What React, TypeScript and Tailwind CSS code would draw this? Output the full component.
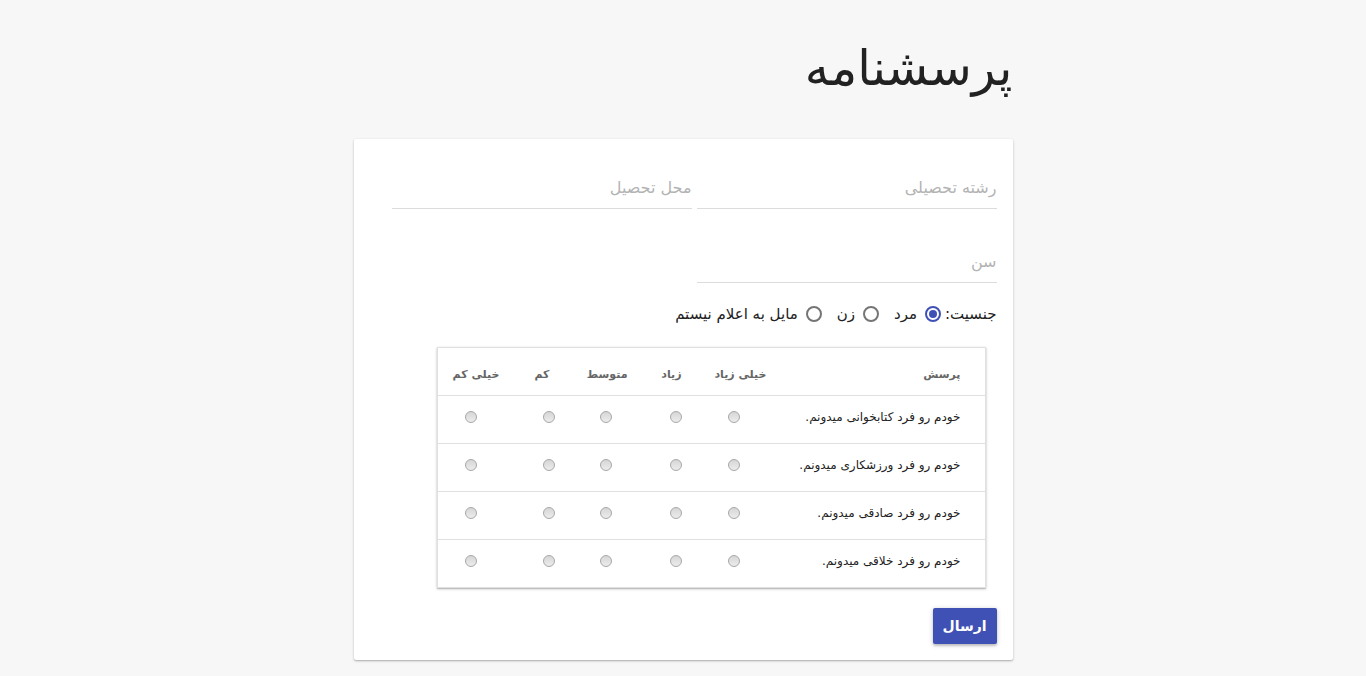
// Questionnaire page — RTL card with inputs, gender radios and a Likert table

const columns = [
  { label: 'خیلی زیاد', head: 'pr-[22px]', dot: 'pr-[49px]' },
  { label: 'زیاد', head: 'pr-[17px]', dot: 'pr-[17px]' },
  { label: 'متوسط', head: 'pr-[11px]', dot: 'pr-[27px]' },
  { label: 'کم', head: 'pr-[29px]', dot: 'pr-[24px]' },
  { label: 'خیلی کم', head: 'pr-[19px]', dot: 'pr-[42px]' },
]

const questions = [
  'خودم رو فرد کتابخوانی میدونم.',
  'خودم رو فرد ورزشکاری میدونم.',
  'خودم رو فرد صادقی میدونم.',
  'خودم رو فرد خلاقی میدونم.',
]

const font = "font-['DejaVu_Sans',sans-serif]"

function Field({ label }: { label: string }) {
  return (
    <div className="w-[300px] h-full border-b border-[#dcdcdc] flex items-end pb-[8px]">
      <span className="text-[16px] leading-[24px] text-[#b3b3b3]">{label}</span>
    </div>
  )
}

function Gender({ label, checked }: { label: string; checked?: boolean }) {
  return (
    <label className="flex items-center gap-[8px]">
      <span
        className={
          checked
            ? 'w-[16px] h-[16px] rounded-full border-2 border-[#3f51b5] flex items-center justify-center'
            : 'w-[16px] h-[16px] rounded-full border-2 border-[#757575]'
        }
      >
        {checked && <span className="w-[8px] h-[8px] rounded-full bg-[#3f51b5]" />}
      </span>
      <span>{label}</span>
    </label>
  )
}

function Dot() {
  return (
    <span className="block w-[12px] h-[12px] rounded-full border border-[#a8a8a8] bg-gradient-to-b from-[#d6d6d6] to-[#ececec]" />
  )
}

export default function App() {
  return (
    <div className={`min-h-screen bg-[#f7f7f7] ${font}`} dir="rtl">
      <div className="w-[659px] mx-auto">
        {/* Title */}
        <h1 className="pt-[35px] h-[139px] text-[49px] leading-[68px] text-[#222]">پرسشنامه</h1>

        {/* Card */}
        <div className="bg-white rounded-[2px] shadow-[0_1px_3px_rgba(0,0,0,0.2),0_1px_1px_rgba(0,0,0,0.14)] pt-[21px] pb-[16px] pr-[16px] pl-[38px]">
          <div className="flex gap-[5px] h-[49px]">
            <Field label="رشته تحصیلی" />
            <Field label="محل تحصیل" />
          </div>
          <div className="flex gap-[5px] h-[49px] mt-[25px]">
            <Field label="سن" />
          </div>

          {/* Gender */}
          <div className="mt-[19px] h-[24px] flex items-center gap-[4px] text-[15px] text-[#222]">
            <span>جنسیت:</span>
            <div className="flex items-center gap-[15px]">
              <Gender label="مرد" checked />
              <Gender label="زن" />
              <Gender label="مایل به اعلام نیستم" />
            </div>
          </div>

          {/* Likert table */}
          <div className="mt-[21px] mr-[11px] w-[549px] border border-[#e0e0e0] bg-white shadow-[0_1px_3px_rgba(0,0,0,0.2),0_1px_1px_rgba(0,0,0,0.14)]">
            <div className="grid grid-cols-[196px_90px_60px_60px_60px_82px] h-[48px] pt-[7px] items-center border-b border-[#e0e0e0] text-[11px] font-semibold text-[#666] whitespace-nowrap">
              <div className="pr-[24px]">پرسش</div>
              {columns.map((c) => (
                <div key={c.label} className={c.head}>{c.label}</div>
              ))}
            </div>
            {questions.map((q, i) => (
              <div
                key={q}
                className={
                  i < questions.length - 1
                    ? 'grid grid-cols-[196px_90px_60px_60px_60px_82px] h-[48px] pb-[5px] items-center border-b border-[#e0e0e0]'
                    : 'grid grid-cols-[196px_90px_60px_60px_60px_82px] h-[47px] pb-[5px] items-center'
                }
              >
                <div className="pr-[24px] text-[12px] text-[#222] whitespace-nowrap">{q}</div>
                {columns.map((c) => (
                  <div key={c.label} className={c.dot}>
                    <Dot />
                  </div>
                ))}
              </div>
            ))}
          </div>

          {/* Submit */}
          <div className="mt-[20px] flex">
            <button className="w-[64px] h-[36px] rounded-[2px] bg-[#3f51b5] text-white text-[14px] font-semibold shadow-[0_1px_5px_rgba(0,0,0,0.2),0_2px_2px_rgba(0,0,0,0.14)]">
              ارسال
            </button>
          </div>
        </div>
      </div>
    </div>
  )
}
